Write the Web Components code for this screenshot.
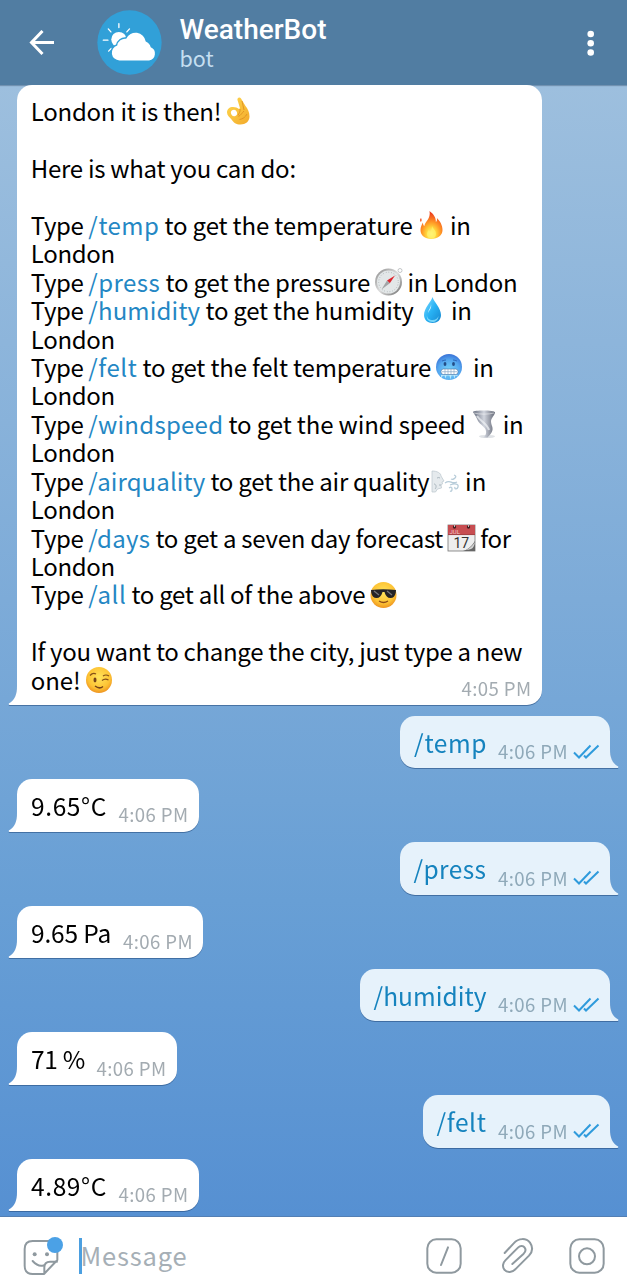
<!DOCTYPE html>
<html lang="en">
<head>
<meta charset="utf-8">
<title>WeatherBot</title>
<style>
html,body{margin:0;height:100%;overflow:hidden}
body{font-family:"Noto Sans CJK SC","Noto Sans",sans-serif}
</style>
</head>
<body>
<chat-app></chat-app>
<script>
const define=(name,html,setup)=>customElements.define(name,class extends HTMLElement{
  constructor(){super();const t=document.createElement('template');t.innerHTML=html;
    this.attachShadow({mode:'open'}).append(t.content.cloneNode(true));}
  connectedCallback(){if(setup)setup(this,this.shadowRoot);}
});

/* A run of text whose tracking is set so it occupies exactly w pixels. */
define('text-run',`<style>
:host{display:block;flex:none;white-space:pre}
:host([link]){color:var(--link,#2487c4)}
span{display:inline-block;white-space:pre}
</style><span></span>`,(el,root)=>{
  const s=root.querySelector('span');
  const w=+el.getAttribute('w');
  el.style.width=w+'px';
  s.textContent=el.getAttribute('t');
  queueMicrotask(()=>{
    s.textContent=el.getAttribute('t');
    s.style.letterSpacing='0px';
    s.style.letterSpacing=((w-s.getBoundingClientRect().width)/[...s.textContent].length)+'px';
  });
});

define('text-line',`<style>
:host{display:flex;height:28.45px;line-height:28.45px;align-items:center}
</style><slot></slot>`);

const face=`<radialGradient id="f" cx=".5" cy=".4" r=".6"><stop offset="0" stop-color="#ffe45c"/><stop offset=".7" stop-color="#fdc334"/><stop offset="1" stop-color="#ee9421"/></radialGradient>`;
const EMOJI={
ok:`<defs><linearGradient id="a" x2="1" y2="1"><stop stop-color="#ffd94f"/><stop offset="1" stop-color="#f2a92a"/></linearGradient></defs>
<path fill="url(#a)" d="M11.500 1.800C12.500.2 14 .2 15 1.500L19.500 9c2 2.500 4 6 4 10.500 0 5-4 8-9 8-4.500 0-7-2-9-5C3.500 20 1 18.500 1 15.500c0-3.500 2.500-5.500 6-5.500 2.500 0 4.500.8 6 2l1-.8-1.800-6c-.5-1.500-1-2.500-.7-3.400z"/>
<ellipse cx="8" cy="16" rx="3" ry="3.200" transform="rotate(-25 8 16)" fill="#fff"/>
<path d="M16 4l2 9M14 12c.5 3-1 4-2 6.500M18 14c-2 2-3 4-5.500 5.500M21 17c-1.500 3-4 5-7.500 5.500" fill="none" stroke="#dc8c20" stroke-width=".8"/>`,
fire:`<defs><radialGradient id="a" cx=".5" cy=".82" r=".75"><stop stop-color="#fffa9c"/><stop offset=".3" stop-color="#ffd43b"/><stop offset=".58" stop-color="#ff9424"/><stop offset="1" stop-color="#ed3f20"/></radialGradient></defs>
<path fill="url(#a)" d="M11.500 0c4 3 6.500 6.500 6.400 11 1-.9 1.300-2.200 1-4 3 3 5.700 7.200 5.600 12 0 5.500-5 9-11.300 9S2.500 24.500 2.500 19c0-3 1.300-5.500 2.500-7.500 0 2 .4 3 1.400 3.500C7 10 13 8 11.500 0zM3 7c1 2 .8 3-.2 4-1-1.500-1-2.500.2-4z"/>
<path fill="#fff16a" opacity=".75" d="M14 15c1 3 4 4 4 8 0 2.500-1.800 4.500-4.500 4.500S9 25.500 9 23c0-2 1-3 2-4 .3 1 .7 1.500 1.300 1.700C13.500 19 14 17 14 15z"/>`,
compass:`<defs><linearGradient id="a" x2="1" y2="1"><stop stop-color="#888"/><stop offset=".5" stop-color="#ddd"/><stop offset="1" stop-color="#666"/></linearGradient></defs>
<circle cx="25" cy="2.500" r="2" fill="none" stroke="#b4b8ba" stroke-width=".8"/><circle cx="13.500" cy="14" r="13.500" fill="url(#a)"/><circle cx="13.500" cy="14" r="11.500" fill="#e3e7e8"/><circle cx="13.500" cy="14" r="9.800" fill="none" stroke="#a3abae" stroke-width="1" stroke-dasharray=".7 2"/><path d="M20 7.500l-8 5 2.800 2.800z" fill="#dd252e"/><path d="M6.500 21.500l5.500-9 2.800 2.800z" fill="#a2a5a7"/>`,
drop:`<defs><linearGradient id="a" x2="1" y2="1"><stop stop-color="#86dcff"/><stop offset=".5" stop-color="#28b2f4"/><stop offset="1" stop-color="#1686cf"/></linearGradient></defs><path fill="url(#a)" d="M13.500 1c1.500 5 8.500 11 8.500 18 0 5-3.700 8-8.500 8S5 24 5 19C5 12 12 6 13.500 1z"/><path d="M8 19c-.1 3 2.200 5 5.500 5 3 0 5-1.500 6-4-.2 4-3 6-6 6-4 0-6.500-3-5.500-7z" fill="#8ce4ff" opacity=".8"/><path d="M12 8c0 4-3 6-3 9 1-3 4-4 3-9z" fill="#d8f6ff"/>`,
cold:`<defs><radialGradient id="a" cx=".5" cy=".65" r=".65"><stop stop-color="#79d8fb"/><stop offset=".65" stop-color="#54a7ef"/><stop offset="1" stop-color="#3972d7"/></radialGradient></defs><circle cx="13" cy="14" r="13" fill="url(#a)"/><ellipse cx="9" cy="11" rx="1.400" ry="2" fill="#234d86"/><ellipse cx="17.500" cy="11" rx="1.400" ry="2" fill="#234d86"/><path d="M6 8q2-1 4-1M17 7q2 0 4 1" stroke="#3068b8" fill="none"/><rect x="5" y="16" width="17" height="5.500" rx="2.500" fill="#fff" stroke="#4571a5" stroke-width=".6"/><path d="M6 18.700h15M9 16v5M12 16v5M15 16v5M18 16v5" stroke="#8aa9c7" stroke-width=".7"/><path fill="#dbfaff" opacity=".75" d="M5 23l.5 3 1-3 2-.5 1 3 1-3h3l1 4 1-4h2l1 3 1-3 1.500.5.500 2v-3H5z"/>`,
tornado:`<defs><linearGradient id="a"><stop stop-color="#656c7d"/><stop offset=".5" stop-color="#d1d5de"/><stop offset="1" stop-color="#656a78"/></linearGradient></defs><ellipse cx="16" cy="26.500" rx="8" ry="1.600" fill="#dfe2e6"/><path fill="url(#a)" d="M2 2c1-2 22-2 22 .5-.4 3-4 5.500-4 9 .2 4 2 5 1.500 8.500-.4 3-3 5-5 7.500h-4c2-2 3-4 2.500-6.500-.6-4-5.500-6-8-10C5.500 7.500 4 5 2 2z"/><path d="M3 3c5 1.500 15 1.500 20 0" stroke="#fff" opacity=".5" fill="none"/><path d="M6 6c3 5 10 7 12 14" stroke="#f0f2f5" opacity=".7" fill="none" stroke-width="2"/>`,
wind:`<path fill="#e5eaed" stroke="#bac6cd" stroke-width=".7" d="M0 4c5 0 9 2 9 5l3 5-2 1 .5 2-1.500 1 .5 3-4 1-2 3H0z"/><path d="M5 11q2-1 3 0M9 18H7M2 17c2 0 3 3 1 5" fill="none" stroke="#aab6be"/><path d="M13 16c6-4 6 2 12-1M19 12q2 1 4-1t-1-3M18 18c5-2 9-1 8 2s-4 2-3 0M17 21q3-2 3 1t-2 2" fill="none" stroke="#b7ccd9" stroke-width="1.300"/>`,
cal:`<rect y="1" width="27" height="26" fill="#eee" stroke="#777" stroke-width=".8"/><path d="M0 1h27v10H0z" fill="#c74d51"/><path d="M0 10.600h27" stroke="#943b3e" stroke-width=".7"/><circle cx="6.500" cy="3" r="1.700" fill="#441e20"/><circle cx="20.500" cy="3" r="1.700" fill="#441e20"/><path d="M6.500 0v3M20.500 0v3" stroke="#bbb"/><text x="1.500" y="10" font-size="6" fill="#f1c7c6" font-family="Roboto,sans-serif">JUL</text><text x="5.500" y="23.500" font-size="14" fill="#333" font-family="Roboto,sans-serif">17</text><path fill="#666" d="M15 27q7-2 12-10v10z"/><path fill="#d3d3d3" d="M18 26q5-2 9-8-1 6-4 7t-5 1z"/>`,
cool:`<defs>${face}</defs><circle cx="13.500" cy="14" r="13" fill="url(#f)"/><path fill="#252427" d="M1 9q12-1.500 25 0c0 5-2 8-5.500 8s-5-2.500-6-6h-2c-1 3.500-2.500 6-6 6C3 17 1 14 1 9z"/><path d="M4 10l5 4M17 10l5 4" stroke="#77777b" stroke-width="1.300"/><path d="M9 20q4.500 3 9 0" stroke="#8d4b18" stroke-width="1.300" fill="none"/>`,
wink:`<defs>${face}</defs><circle cx="13" cy="14" r="13" fill="url(#f)"/><ellipse cx="9" cy="14" rx="1.500" ry="2.400" fill="#774318"/><path d="M4 9.500Q7 6 10 8M17 10q3-2 6 0M16 14.500q3-2.500 6.500-.5" fill="none" stroke="#855017" stroke-width="1.200"/><path d="M9 20q4.500 3.500 8 .5" fill="none" stroke="#774318" stroke-width="1.500"/>`
};
define('emoji-glyph',`<style>:host{display:block;flex:none;width:27px;height:28px}svg{display:block;overflow:visible}</style><svg width="27" height="28" viewBox="0 0 27 28"></svg>`,(el,r)=>{r.querySelector('svg').innerHTML=EMOJI[el.getAttribute('name')];});

define('chat-bubble',`<style>
:host{display:block;position:relative;box-sizing:border-box;flex:none;background:#fff;border-radius:15px 15px 15px 0;margin-left:17px;align-self:flex-start;filter:drop-shadow(0 1px .4px rgba(40,80,130,.6))}
:host([out]){background:#e6f2fb;border-radius:15px 15px 0 15px;align-self:flex-end;margin:0 17px 0 0;--link:#1583be}
svg{position:absolute;bottom:0;left:-9px;fill:#fff}
:host([out]) svg{left:auto;right:-9px;transform:scaleX(-1);fill:#e6f2fb}
</style><slot></slot><svg width="10" height="19" viewBox="0 0 10 19"><path d="M10 0H9C9 9 6.500 14.500.8 17.500Q.2 19 2 19H10z"/></svg>`);

define('time-stamp',`<style>
:host{display:flex;align-items:center;height:24px;line-height:24px;font-size:18.600px;color:#a3abb1;flex:none}
:host([out]){color:#8fa9b9}
svg{display:none;margin-left:5px}
:host([out]) svg{display:block}
</style><text-run t="4:06 PM" w="70"></text-run><svg width="27" height="17" viewBox="0 0 27 17" fill="none" stroke="#2f9bdc" stroke-width="2"><path d="M1 9.500l5 5L17.500 2.500M11 12.500l2 2L25.500 2.500"/></svg>`,(el,r)=>{if(el.hasAttribute('t'))r.querySelector('text-run').setAttribute('t',el.getAttribute('t'));});

/* One-line message: text plus time. */
define('short-message',`<style>
:host{display:contents}
chat-bubble{height:52.600px;font-size:24.500px}
div{display:flex;justify-content:space-between;height:52px;padding:0 10px 0 14px;box-sizing:border-box;line-height:53px}
time-stamp{margin-top:23.500px}
</style><chat-bubble><div></div></chat-bubble>`,(el,r)=>{
  const out=el.hasAttribute('out'),b=r.querySelector('chat-bubble');
  b.style.width=el.getAttribute('bw')+'px';b.toggleAttribute('out',out);
  r.querySelector('div').innerHTML=`<text-run ${out?'link':''} t="${el.getAttribute('t')}" w="${el.getAttribute('w')}"></text-run><time-stamp ${out?'out':''}></time-stamp>`;
});

define('app-header',`<style>
:host{display:flex;align-items:center;height:85px;flex:none;background:#517da2;box-sizing:border-box;box-shadow:0 1px 1px rgba(50,80,110,.4);position:relative;padding:0 29px 0 29px;color:#fff}
.av{margin-left:42px}.who{margin-left:17.500px;flex:1;height:85px;display:flex;flex-direction:column}
.n{font:500 28px/32px Roboto,sans-serif;margin-top:14px}
.s{font-size:21.500px;line-height:28px;color:#c5dff1;margin-top:-2px}
svg{display:block;flex:none}
</style>
<svg width="26" height="26" viewBox="0 0 26 26" fill="none" stroke="#fff" stroke-width="3"><path d="M25 12.500H3M13.500 1L2.500 12.500l11 11.500"/></svg>
<svg class="av" width="65" height="65" viewBox="291 30 196 196"><circle cx="389" cy="128" r="97" fill="#31a0d8"/><g stroke="#fff" stroke-width="4" stroke-linecap="round"><path d="M357 71v12M325 87l8 9M389 87l-8 9M310 121h14M326 154l8-8"/></g><circle cx="357" cy="119" r="23" fill="#fff"/><path d="M359 182a23 23 0 01-7-45 24 24 0 0127-20 31 31 0 0159 8 26 26 0 0115 17 21 21 0 01-5 40z" fill="#fff" stroke="#31a0d8" stroke-width="9" paint-order="stroke"/></svg>
<div class="who"><text-run class="n" t="WeatherBot" w="147"></text-run><text-run class="s" t="bot" w="34"></text-run></div>
<svg width="14" height="26" viewBox="0 0 14 26" fill="#fff"><circle cx="6.700" cy="4" r="3.300"/><circle cx="6.700" cy="13.200" r="3.300"/><circle cx="6.700" cy="22.500" r="3.300"/></svg>`);

define('message-bar',`<style>
:host{display:flex;align-items:center;height:63px;flex:none;background:#fff;box-shadow:0 -1px 0 rgba(80,110,150,.5);position:relative;padding:14px 22px 0 23px;box-sizing:border-box}
svg{display:block;flex:none;fill:none;stroke:#8f999f;stroke-width:6;stroke-linecap:round;stroke-linejoin:round}
i{width:3px;height:36px;background:#4b9fe0;margin:0 -1.500px 0 16px}
text-run{font-size:25.500px;line-height:40px;color:#a6afb6;margin-top:-2px}
.sp{flex:1}
</style>
<svg width="40" height="40" viewBox="70 282 120 120"><path d="M148 297H99Q75 297 75 321V371Q75 396 99 396H133L173 354V330M134 395V376Q134 359 151 359H172M99 357Q116 376 132 370"/><circle cx="105" cy="337" r="6" fill="#8f999f" stroke="none"/><circle cx="142" cy="337" r="6" fill="#8f999f" stroke="none"/><circle cx="166" cy="309" r="24" fill="#4ba1e6" stroke="none"/></svg>
<i></i><text-run t="Message" w="107"></text-run><span class="sp"></span>
<svg width="36" height="36" viewBox="79 112 108 108"><rect x="83" y="116" width="100" height="100" rx="27"/><path d="M145 140L124 193"/></svg>
<svg style="margin-left:39px" width="34" height="37" viewBox="302 110 102 111"><path d="M313 158L340 129C355 112 378 113 389 127C398 140 396 155 386 166L347 205C337 217 320 218 312 208C305 199 308 187 315 180L353 142C360 135 369 136 373 142C378 149 375 155 370 160L336 191"/></svg>
<svg style="margin-left:34px" width="36" height="36" viewBox="509 112 108 108"><rect x="513" y="116" width="100" height="100" rx="27"/><circle cx="563" cy="167" r="24"/></svg>`);

const line=(...p)=>'<text-line>'+p.map(x=>Array.isArray(x)?`<text-run ${x[2]?'link':''} t="${x[0]}" w="${x[1]}"></text-run>`:`<emoji-glyph name="${x}"></emoji-glyph>`).join('')+'</text-line>';
const cmd=(c,cw,t,tw,e,u,uw)=>line(['Type ',57.5],[c,cw,1],[t,tw],e,...(u?[[u,uw]]:[]));
const lon=line(['London',84]),gap='<text-line></text-line>';
define('help-message',`<style>
:host{display:contents}
chat-bubble{width:525px;height:620px;font-size:24px;color:#000}
.b{padding:12px 0 0 13.800px}
time-stamp{position:absolute;right:10.500px;bottom:5px}
</style><chat-bubble><div class="b">
${line(['London it is then! ',195.5],'ok')}${gap}${line(['Here is what you can do:',265])}${gap}
${cmd('/temp',71,' to get the temperature ',258.5,'fire',' in',26)}${lon}
${cmd('/press',72,' to get the pressure ',215,'compass',' in London',115)}
${cmd('/humidity',112,' to get the humidity ',218.5,'drop',' in',26)}${lon}
${cmd('/felt',49,' to get the felt temperature ',299,'cold','  in',30)}${lon}
${cmd('/windspeed',135,' to get the wind speed ',247.5,'tornado',' in',25.5)}${lon}
${line(['Type ',57.5],['/airquality',117,1],[' to get the air quality',224],[' ',3],'wind',[' in',27.5])}${lon}
${cmd('/days',62,' to get a seven day forecast ',298,'cal',' for',35.5)}${lon}
${cmd('/all',38,' to get all of the above ',244,'cool')}${gap}
${line(['If you want to change the city, just type a new',491.5])}
${line(['one! ',55],'wink')}
</div><time-stamp t="4:05 PM"></time-stamp></chat-bubble>`);

define('chat-app',`<style>
:host{display:flex;flex-direction:column;width:627px;height:1280px;background:linear-gradient(#a6c5e1 0,#9dbfde 85px,#7dabd8 600px,#689fd5 900px,#5690d2 1217px);overflow:hidden}
main{display:flex;flex-direction:column;flex:1;min-height:0;gap:10.700px;color:#000}
</style><app-header></app-header><main><help-message></help-message>
<short-message out t="/temp" w="73" bw="210"></short-message>
<short-message t="9.65°C" w="76" bw="181.500"></short-message>
<short-message out t="/press" w="73" bw="210.500"></short-message>
<short-message t="9.65 Pa" w="80" bw="186"></short-message>
<short-message out t="/humidity" w="113" bw="250.500"></short-message>
<short-message t="71 %" w="54" bw="159.500"></short-message>
<short-message out t="/felt" w="50" bw="187.500"></short-message>
<short-message t="4.89°C" w="76" bw="181.500"></short-message>
</main><message-bar></message-bar>`);
</script>
</body>
</html>
